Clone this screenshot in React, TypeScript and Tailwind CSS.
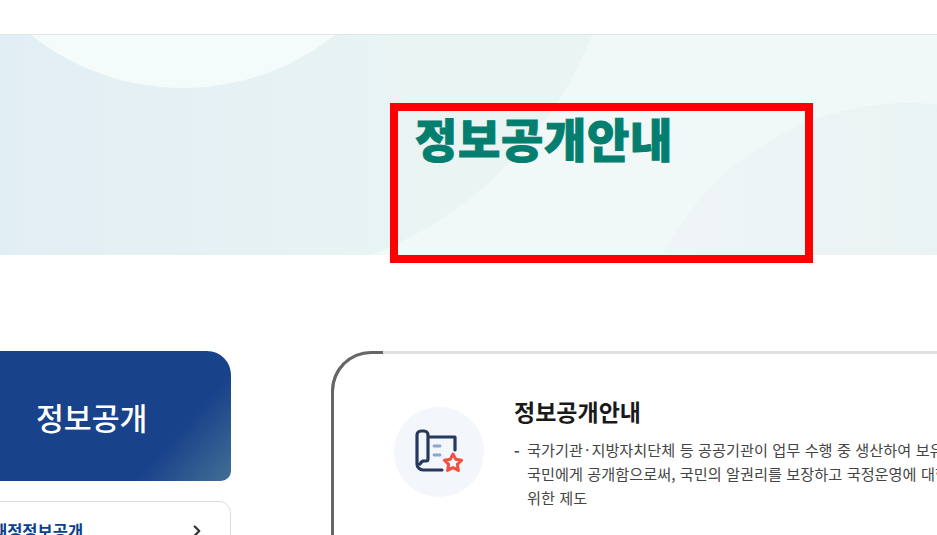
import { ChevronRight } from 'lucide-react';

function GuideIcon() {
  return (
    <svg viewBox="0 0 90 90" className="w-[90px] h-[90px]" fill="none" strokeLinecap="round" strokeLinejoin="round">
      <path
        d="M48 63H29a6 6 0 0 1-6-6V28a4 4 0 0 1 4-4h3a4 4 0 0 1 4 4v24a2 2 0 0 1-2 2h-3a6 6 0 0 0-3 3M34 30h27v13"
        stroke="#27385f"
        strokeWidth="3.2"
      />
      <path d="M40 39h6M40 48h6" stroke="#8aa5cf" strokeWidth="2.8" />
      <path
        d="M59 47l2.7 5.3 5.9.9-4.2 4.2 1 6-5.4-2.8-5.4 2.8 1-6-4.2-4.2 5.9-.9z"
        stroke="#f4503f"
        strokeWidth="3"
      />
    </svg>
  );
}

export default function App() {
  return (
    <div className="relative w-[937px] h-[535px] overflow-hidden bg-white font-['Noto_Sans_CJK_KR','Liberation_Sans',sans-serif]">
      {/* top bar */}
      <div className="h-[35px] bg-white border-b border-[#e3e6e8]" />

      {/* banner */}
      <div className="relative h-[220px] overflow-hidden bg-[linear-gradient(90deg,#e1eef4_0%,#e4f0f4_12%,#f1f8f8_35%,#f1f8f8_100%)]">
        <div className="absolute left-[-164px] top-[-537px] w-[784px] h-[784px] rounded-full bg-[linear-gradient(90deg,#e1eef4_20%,#e9f4f3_75%,#eaf5f3_100%)]" />
        <div className="absolute left-[-61px] top-[-435px] w-[488px] h-[488px] rounded-full bg-[#f4fcfb]" />
        <div className="absolute left-[635px] top-[68px] w-[546px] h-[546px] rounded-full bg-[linear-gradient(90deg,#f0f5f7_0%,#e5f1f0_100%)]" />
        <h1 className="relative pl-[415px] pt-[69px] text-[46px] leading-[66px] font-black tracking-[0.7px] text-[#047e6f] [-webkit-text-stroke:1px_#047e6f]">정보공개안내</h1>
      </div>

      {/* annotation box */}
      <div className="absolute left-[390px] top-[103px] w-[423px] h-[160px] border-[8px] border-[#ff0000]" />

      {/* content */}
      <div className="flex items-start pt-[96px] ml-[-40px]">
        <aside className="w-[271px] shrink-0">
          <div className="h-[130px] rounded-tr-[24px] rounded-br-[10px] bg-[linear-gradient(132deg,#18428a_0%,#18428a_75%,#426f96_100%)] flex items-center pl-[76px] pt-[3px]">
            <span className="text-[30.3px] font-medium text-white leading-none">정보공개</span>
          </div>
          <div className="mt-[20px] h-[80px] border border-[#dddddd] rounded-tr-[12px] flex justify-between pl-[31px] pr-[24px] pt-[19px]">
            <span className="text-[16.5px] leading-[20px] font-bold text-[#0b3f8f]">재정정보공개</span>
            <ChevronRight className="w-[18px] h-[18px] mt-[1px] text-[#333]" strokeWidth={3} />
          </div>
        </aside>

        <section className="relative ml-[100px] w-[800px] h-[200px] shrink-0 border-t-[3px] border-l-[3px] border-t-[#e0e0e0] border-l-[#666666] rounded-tl-[40px] flex items-start pl-[60px] pt-[53px]">
          <div className="absolute -top-[3px] -left-[3px] w-[52px] h-[60px] border-t-[3px] border-l-[3px] border-[#666666] rounded-tl-[40px]" />
          <div className="w-[90px] h-[90px] rounded-full bg-[#f3f6fb] shrink-0">
            <GuideIcon />
          </div>
          <div className="ml-[30px] -mt-[13px]">
            <h2 className="text-[23px] leading-[34px] font-semibold text-[#1a1a1a]">정보공개안내</h2>
            <div className="flex mt-[9px] text-[15.2px] leading-[24px] [word-spacing:1px] text-[#444444] whitespace-nowrap">
              <span className="w-[13px] font-bold">-</span>
              <p>
                국가기관·지방자치단체 등 공공기관이 업무 수행 중 생산하여 보유·관리하는 정보를
                <br />
                국민에게 공개함으로써, 국민의 알권리를 보장하고 국정운영에 대한 투명성을 확보하기
                <br />
                위한 제도
              </p>
            </div>
          </div>
        </section>
      </div>
    </div>
  );
}
